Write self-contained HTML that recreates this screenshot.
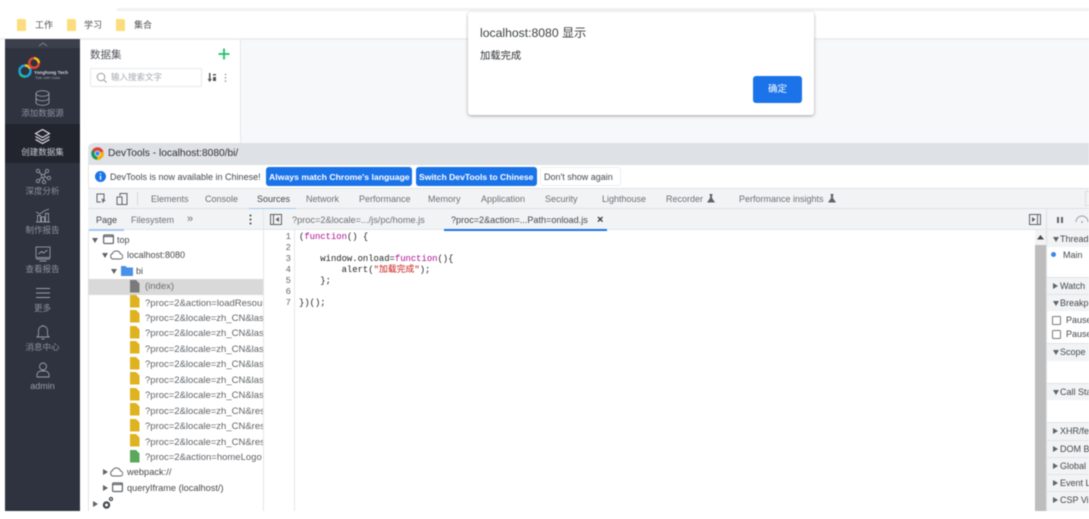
<!DOCTYPE html>
<html lang="zh"><head><meta charset="utf-8">
<style>
html,body{margin:0;padding:0;background:#fff}
#r{position:relative;width:1089px;height:519px;overflow:hidden;background:#fff;font-family:"Liberation Sans","Noto Sans CJK SC",sans-serif;filter:blur(.45px)}
#r div,#r svg,#r span.t{position:absolute}
.t{white-space:nowrap;font-size:9px;color:#5f6368;line-height:12px}
.c{text-align:center;color:#8f929b;font-size:8.5px;left:5px;width:75px;line-height:12px}
.tr{color:#45484c}
.f{color:#6d7074}
.code{font-family:"Liberation Mono","Noto Sans CJK SC",monospace;font-size:8.9px;color:#222;line-height:11px;white-space:pre}
.ln{font-family:"Liberation Mono",monospace;font-size:8.9px;color:#666;line-height:11px;left:280px;width:11px;text-align:right}
.h{left:1047px;width:42px;height:1px;background:#e2e4e7}
.rt{left:1060px;color:#45484c;font-size:9px}
</style></head><body><div id="r">

<!-- browser top -->
<div style="left:117px;top:8px;width:972px;height:3px;background:#f0f1f2"></div>
<div style="left:0;top:38px;width:1089px;height:2px;background:#eceef0"></div>
<svg style="left:17px;top:19px" width="10" height="12"><path d="M0 0h7l2 1v11H0z" fill="#fcdc7c"/></svg>
<span class="t" style="left:35px;top:19px;font-size:9px;color:#4c4f54">工作</span>
<svg style="left:67px;top:19px" width="10" height="12"><path d="M0 0h7l2 1v11H0z" fill="#fcdc7c"/></svg>
<span class="t" style="left:84px;top:19px;color:#4c4f54">学习</span>
<svg style="left:116px;top:19px" width="10" height="12"><path d="M0 0h7l2 1v11H0z" fill="#fcdc7c"/></svg>
<span class="t" style="left:134px;top:19px;color:#4c4f54">集合</span>

<!-- app bg -->
<div style="left:241px;top:40px;width:848px;height:104px;background:#f7f8fa"></div>
<div style="left:240px;top:40px;width:1px;height:104px;background:#e4e6e9"></div>

<!-- sidebar -->
<div style="left:5px;top:39px;width:75px;height:472px;background:#2f3340"></div>
<div style="left:5px;top:39px;width:75px;height:9px;background:#3c404d"></div>
<svg style="left:37px;top:41px" width="12" height="6"><path d="M2 5l4-3 4 3" fill="none" stroke="#7c808b"/></svg>
<div style="left:5px;top:124px;width:75px;height:39px;background:#22252e"></div>

<svg style="left:17px;top:56px" width="24" height="24" fill="none" stroke-width="2.4"><circle cx="8" cy="15" r="5.5" stroke="#1aa6d8"/><path d="M8 9.5a5.5 5.5 0 0 1 5 3" stroke="#f5c518"/><path d="M3 18a5.5 5.5 0 0 0 5 2.5" stroke="#22c08a"/><circle cx="17" cy="7" r="4.8" stroke="#e2452f"/><path d="M17 2.2a4.8 4.8 0 0 1 4.8 4.8" stroke="#f5c518"/></svg>
<span class="t" style="left:34px;top:69px;font-size:4.6px;font-weight:bold;color:#d0d2d6;line-height:7px">Yonghong Tech</span>
<span class="t" style="left:35px;top:75px;font-size:4px;color:#9a9da5;line-height:6px">Talk with Data</span>

<svg style="left:35px;top:90px" width="15" height="16" fill="none" stroke="#9a9da6" stroke-width=".9"><ellipse cx="7.5" cy="3.5" rx="6.5" ry="2.8"/><path d="M1 3.500v9c0 1.600 3 2.800 6.500 2.800s6.500-1.200 6.500-2.800v-9M1 8c0 1.600 3 2.800 6.500 2.800S14 9.600 14 8"/></svg>
<div class="t c" style="top:107px">添加数据源</div>
<svg style="left:34px;top:128px" width="17" height="17" fill="none" stroke="#e4e5e8" stroke-width="1.100"><path d="M8.500 1.500l7 4-7 4-7-4zM1.500 8.500l7 4 7-4M1.500 11.500l7 4 7-4"/></svg>
<div class="t c" style="top:146px;color:#c9cbd0">创建数据集</div>
<svg style="left:35px;top:168px" width="16" height="16" fill="none" stroke="#9a9da6" stroke-width=".9"><circle cx="3" cy="3" r="1.700"/><circle cx="12" cy="3" r="1.700"/><circle cx="8" cy="8" r="1.700"/><circle cx="14" cy="10" r="1.700"/><circle cx="3" cy="13" r="1.700"/><circle cx="9" cy="14" r="1.700"/><path d="M4 4l3 3M11 4L9 7M9.500 8.500L12.500 10M7 9.500L4 12M8.500 9.500v3"/></svg>
<div class="t c" style="top:185px">深度分析</div>
<svg style="left:35px;top:207px" width="16" height="16" fill="none" stroke="#9a9da6" stroke-width=".9"><path d="M1 15h14M2.500 15V8.500h3V15M6.500 15V10h3v5M10.500 15V6.500h3V15M1 5l4 2 4-3 5-2"/></svg>
<div class="t c" style="top:224px">制作报告</div>
<svg style="left:35px;top:246px" width="16" height="16" fill="none" stroke="#9a9da6" stroke-width=".9"><rect x="1" y="1" width="14" height="10.500"/><path d="M3.500 8l3-2.500 2 1.500 4-3M1 13h14M4.500 15h7"/></svg>
<div class="t c" style="top:263px">查看报告</div>
<svg style="left:35px;top:287px" width="16" height="12" stroke="#9a9da6" stroke-width=".9"><path d="M1 1.500h14M1 6h14M1 10.500h14"/></svg>
<div class="t c" style="top:302px">更多</div>
<svg style="left:36px;top:324px" width="14" height="16" fill="none" stroke="#9a9da6" stroke-width=".9"><path d="M1 13h12l-1.500-2V6.500a4.500 4.500 0 0 0-9 0V11zM7 1v1M5.500 15h3"/></svg>
<div class="t c" style="top:341px">消息中心</div>
<svg style="left:36px;top:362px" width="14" height="16" fill="none" stroke="#9a9da6" stroke-width=".9"><circle cx="7" cy="4.500" r="3.500"/><path d="M1 15v-2a4 4 0 0 1 4-4h4a4 4 0 0 1 4 4v2z"/></svg>
<div class="t c" style="top:380px;font-size:9px;color:#9a9da6">admin</div>

<!-- dataset panel -->
<span class="t" style="left:90px;top:48px;font-size:10.500px;color:#50535a;line-height:14px">数据集</span>
<svg style="left:218px;top:48px" width="12" height="12"><path d="M6 .5v11M.5 6h11" stroke="#1fbf6b" stroke-width="1.800"/></svg>
<div style="left:90px;top:68px;width:110px;height:17px;border:1px solid #e6e8eb;border-radius:2px;background:#fff"></div>
<svg style="left:96px;top:72px" width="11" height="11" fill="none" stroke="#9a9da3"><circle cx="5" cy="5" r="3.800"/><path d="M8 8l2.500 2.500"/></svg>
<span class="t" style="left:111px;top:71px;font-size:8.500px;color:#a5a8ad">输入搜索文字</span>
<svg style="left:207px;top:73px" width="10" height="9" fill="#555"><path d="M2 0h1.500v6H5L2.700 9 .5 6H2zM6 1h3v1.500H6zM6 4h3v4H6z"/></svg>
<svg style="left:224px;top:73px" width="3" height="10" fill="#a5a8ad"><circle cx="1.500" cy="1.500" r=".9"/><circle cx="1.500" cy="4.800" r=".9"/><circle cx="1.500" cy="8.100" r=".9"/></svg>

<!-- devtools window -->
<div style="left:88px;top:143px;width:1001px;height:368px;background:#fff;border-radius:6px 0 0 0"></div>
<div style="left:88px;top:143px;width:1001px;height:22px;background:#dee1e6;border-radius:6px 0 0 0"></div>
<div style="left:88px;top:146px;width:1px;height:365px;background:#e4e6e9"></div>
<svg style="left:91px;top:147px" width="13" height="13" viewBox="0 0 13 13"><circle cx="6.500" cy="6.500" r="6.200" fill="#db4437"/><path d="M6.500 6.500L1.100 3.500A6.200 6.200 0 0 0 6 12.700z" fill="#0f9d58"/><path d="M6.500 6.500L12.300 4.500A6.200 6.200 0 0 1 6 12.700z" fill="#f4b400"/><circle cx="6.500" cy="6.500" r="2.900" fill="#fff"/><circle cx="6.500" cy="6.500" r="2.200" fill="#4285f4"/></svg>
<span class="t" style="left:108px;top:147px;font-size:10.200px;color:#2e3033;line-height:13px">DevTools - localhost:8080/bi/</span>

<!-- infobar -->
<svg style="left:95px;top:171px" width="11" height="11"><circle cx="5.500" cy="5.500" r="5.500" fill="#1a73e8"/><path d="M5.500 2.300v1.300M5.500 4.800v4" stroke="#fff" stroke-width="1.300"/></svg>
<span class="t" style="left:110px;top:171px;font-size:9px;color:#45484c">DevTools is now available in Chinese!</span>
<div style="left:266px;top:167px;width:146px;height:19px;border-radius:3px;background:#1a73e8"></div>
<span class="t" style="left:269px;top:171px;color:#fff;font-weight:bold;font-size:8.700px">Always match Chrome's language</span>
<div style="left:416px;top:167px;width:121px;height:19px;border-radius:3px;background:#1a73e8"></div>
<span class="t" style="left:419px;top:171px;color:#fff;font-weight:bold;font-size:8.600px">Switch DevTools to Chinese</span>
<div style="left:540px;top:167px;width:79px;height:17px;border-radius:3px;border:1px solid #eceef0;background:#fff"></div>
<span class="t" style="left:544px;top:171px;color:#45484c">Don't show again</span>

<!-- main tabs -->
<div style="left:88px;top:188px;width:1001px;height:21px;background:#f1f3f4;border-top:1px solid #e0e2e5;border-bottom:1px solid #dfe1e4;box-sizing:border-box"></div>
<svg style="left:96px;top:193px" width="11" height="12" fill="none" stroke="#5f6368"><path d="M8 7V1H1v8h4"/><path d="M5.500 5.500l4.500 2-2 .8L7 10.500z" fill="#5f6368" stroke="none"/></svg>
<svg style="left:116px;top:193px" width="12" height="12" fill="none" stroke="#5f6368"><path d="M4 3V.5h7v11H4M1 4h5v7.500H1z"/></svg>
<div style="left:137px;top:192px;width:1px;height:13px;background:#d6d8db"></div>
<span class="t f" style="left:151px;top:193px">Elements</span>
<span class="t f" style="left:205px;top:193px">Console</span>
<span class="t tr" style="left:257px;top:193px">Sources</span>
<div style="left:249px;top:208px;width:47px;height:1px;background:#a8c7f0"></div>
<span class="t f" style="left:306px;top:193px">Network</span>
<span class="t f" style="left:359px;top:193px">Performance</span>
<span class="t f" style="left:428px;top:193px">Memory</span>
<span class="t f" style="left:481px;top:193px">Application</span>
<span class="t f" style="left:545px;top:193px">Security</span>
<span class="t f" style="left:602px;top:193px">Lighthouse</span>
<span class="t f" style="left:666px;top:193px">Recorder</span>
<svg style="left:707px;top:194px" width="8" height="9" fill="#5f6368"><path d="M2.500 0h3v1L5 1.500V4l3 4.500H0L3 4V1.500L2.500 1z"/></svg>
<span class="t f" style="left:739px;top:193px">Performance insights</span>
<svg style="left:828px;top:194px" width="8" height="9" fill="#5f6368"><path d="M2.500 0h3v1L5 1.500V4l3 4.500H0L3 4V1.500L2.500 1z"/></svg>
<div style="left:1085px;top:191px;width:4px;height:15px;border:1px solid #dadce0;border-right:0;box-sizing:border-box"></div>

<!-- sub tabs -->
<div style="left:88px;top:209px;width:1001px;height:21px;background:#f1f3f4;border-bottom:1px solid #e3e5e8;box-sizing:border-box"></div>
<span class="t tr" style="left:96px;top:214px">Page</span>
<div style="left:89px;top:229px;width:35px;height:1.500px;background:#a8c7f0"></div>
<span class="t f" style="left:131px;top:214px">Filesystem</span>
<span class="t f" style="left:187px;top:213px;font-size:11px">»</span>
<svg style="left:249px;top:214px" width="3" height="11" fill="#45484c"><circle cx="1.500" cy="1.500" r="1"/><circle cx="1.500" cy="5.500" r="1"/><circle cx="1.500" cy="9.500" r="1"/></svg>
<div style="left:263px;top:209px;width:1px;height:302px;background:#e3e5e8"></div>
<svg style="left:270px;top:214px" width="12" height="11" fill="none" stroke="#5f6368"><rect x=".5" y=".5" width="11" height="10"/><path d="M3.500 .5v10"/><path d="M9 3v5L5.500 5.500z" fill="#5f6368" stroke="none"/></svg>
<span class="t f" style="left:292px;top:214px;font-size:9.200px">?proc=2&amp;locale=.../js/pc/home.js</span>
<span class="t tr" style="left:451px;top:214px;font-size:9.100px">?proc=2&amp;action=...Path=onload.js</span>
<span class="t" style="left:597px;top:214px;color:#333;font-size:11px;font-weight:bold">×</span>
<div style="left:444px;top:229px;width:163px;height:1.500px;background:#1a73e8"></div>
<svg style="left:1029px;top:214px" width="12" height="11" fill="none" stroke="#5f6368"><rect x=".5" y=".5" width="11" height="10"/><path d="M8.500 .5v10"/><path d="M3 3v5l3.500-2.500z" fill="#5f6368" stroke="none"/></svg>
<div style="left:1046px;top:209px;width:1px;height:302px;background:#dfe1e4"></div>
<svg style="left:1056px;top:216px" width="8" height="8" fill="#5f6368"><path d="M1 1h2v6H1zM5 1h2v6H5z"/></svg>
<svg style="left:1075px;top:215px" width="14" height="9" fill="none" stroke="#a8abaf" stroke-width="1.200"><path d="M1 7a6 6 0 0 1 12 0"/><circle cx="7" cy="7" r="1" fill="#a8abaf" stroke="none"/></svg>

<!-- tree -->
<div style="left:88px;top:279px;width:175px;height:15.500px;background:#d9d9d9"></div>
<svg style="left:92px;top:238px" width="6" height="5" fill="#5f6368"><path d="M0 0h6L3 5z"/></svg>
<svg style="left:103px;top:234px" width="11" height="11" fill="none" stroke="#5f6368" stroke-width="1.200"><rect x=".6" y="1" width="9.800" height="8.500" rx="1"/><path d="M.6 2.500h9.800"/></svg>
<span class="t tr" style="left:117px;top:234px">top</span>
<svg style="left:102px;top:253px" width="6" height="5" fill="#5f6368"><path d="M0 0h6L3 5z"/></svg>
<svg style="left:109px;top:250px" width="14" height="10" fill="none" stroke="#5f6368"><path d="M3.500 9h7.500a2.500 2.500 0 0 0 .5-5A4.300 4.300 0 0 0 3.500 3.500 3 3 0 0 0 3.500 9z"/></svg>
<span class="t tr" style="left:127px;top:249px">localhost:8080</span>
<svg style="left:111px;top:269px" width="6" height="5" fill="#5f6368"><path d="M0 0h6L3 5z"/></svg>
<svg style="left:121px;top:266px" width="12" height="10" fill="#4a90e8"><path d="M0 0h4.500l1.500 1.500h6V10H0z"/></svg>
<span class="t tr" style="left:136px;top:265px">bi</span>

<svg style="left:130px;top:280px" width="10" height="13" fill="#7a7a7a"><path d="M0 0h6l3.500 3.500V12.500H0z"/></svg>
<span class="t" style="left:145px;top:281px;color:#6b6e72;font-size:9.500px">(index)</span>
<svg style="left:130px;top:295px" width="10" height="13" fill="#dfb21f"><path d="M0 0h6l3.500 3.500V12.500H0z"/></svg>
<svg style="left:130px;top:310px" width="10" height="13" fill="#dfb21f"><path d="M0 0h6l3.500 3.500V12.500H0z"/></svg>
<svg style="left:130px;top:326px" width="10" height="13" fill="#dfb21f"><path d="M0 0h6l3.500 3.500V12.500H0z"/></svg>
<svg style="left:130px;top:341px" width="10" height="13" fill="#dfb21f"><path d="M0 0h6l3.500 3.500V12.500H0z"/></svg>
<svg style="left:130px;top:357px" width="10" height="13" fill="#dfb21f"><path d="M0 0h6l3.500 3.500V12.500H0z"/></svg>
<svg style="left:130px;top:372px" width="10" height="13" fill="#dfb21f"><path d="M0 0h6l3.500 3.500V12.500H0z"/></svg>
<svg style="left:130px;top:388px" width="10" height="13" fill="#dfb21f"><path d="M0 0h6l3.500 3.500V12.500H0z"/></svg>
<svg style="left:130px;top:403px" width="10" height="13" fill="#dfb21f"><path d="M0 0h6l3.500 3.500V12.500H0z"/></svg>
<svg style="left:130px;top:419px" width="10" height="13" fill="#dfb21f"><path d="M0 0h6l3.500 3.500V12.500H0z"/></svg>
<svg style="left:130px;top:434px" width="10" height="13" fill="#dfb21f"><path d="M0 0h6l3.500 3.500V12.500H0z"/></svg>
<svg style="left:130px;top:450px" width="10" height="13" fill="#5ba85a"><path d="M0 0h6l3.500 3.500V12.500H0z"/></svg>
<div style="left:145px;top:295.500px;width:118px;height:172px;overflow:hidden;font-size:9.500px;color:#5f6368;line-height:15.450px;white-space:nowrap">?proc=2&amp;action=loadResources<br>?proc=2&amp;locale=zh_CN&amp;lastModified<br>?proc=2&amp;locale=zh_CN&amp;lastModified<br>?proc=2&amp;locale=zh_CN&amp;lastModified<br>?proc=2&amp;locale=zh_CN&amp;lastModified<br>?proc=2&amp;locale=zh_CN&amp;lastModified<br>?proc=2&amp;locale=zh_CN&amp;lastModified<br>?proc=2&amp;locale=zh_CN&amp;resource<br>?proc=2&amp;locale=zh_CN&amp;resource<br>?proc=2&amp;locale=zh_CN&amp;resource<br>?proc=2&amp;action=homeLogo</div>

<svg style="left:103px;top:469px" width="5" height="6" fill="#5f6368"><path d="M0 0l5 3-5 3z"/></svg>
<svg style="left:109px;top:467px" width="14" height="10" fill="none" stroke="#5f6368"><path d="M3.500 9h7.500a2.500 2.500 0 0 0 .5-5A4.300 4.300 0 0 0 3.500 3.500 3 3 0 0 0 3.500 9z"/></svg>
<span class="t tr" style="left:127px;top:466px;font-size:9.300px">webpack://</span>
<svg style="left:103px;top:485px" width="5" height="6" fill="#5f6368"><path d="M0 0l5 3-5 3z"/></svg>
<svg style="left:112px;top:482px" width="11" height="11" fill="none" stroke="#5f6368" stroke-width="1.200"><rect x=".6" y="1" width="9.800" height="8.500" rx="1"/><path d="M.6 2.500h9.800"/></svg>
<span class="t tr" style="left:127px;top:482px;font-size:9.200px">queryIframe (localhost/)</span>
<svg style="left:93px;top:501px" width="5" height="6" fill="#5f6368"><path d="M0 0l5 3-5 3z"/></svg>
<svg style="left:102px;top:496px" width="11" height="14" fill="none" stroke="#45484c"><circle cx="4.500" cy="9" r="2.600" stroke-width="2.200"/><circle cx="9" cy="3" r="1.500" stroke-width="1.300"/></svg>

<!-- code -->
<div style="left:294px;top:230px;width:1px;height:281px;background:#e6e7e9"></div>
<div class="ln" style="top:231.500px;line-height:11px">1<br>2<br>3<br>4<br>5<br>6<br>7</div>
<div class="code" style="left:299px;top:231.500px">(<span style="color:#aa0d91">function</span>() {

    window.onload=<span style="color:#aa0d91">function</span>(){
        alert(<span style="color:#c41a16">"加载完成"</span>);
    };

})();</div>

<!-- scrollbar -->
<div style="left:1035px;top:230px;width:11px;height:281px;background:#f3f3f3"></div>
<div style="left:1035px;top:245px;width:11px;height:266px;background:#bdbdbd"></div>
<svg style="left:1037px;top:235px" width="7" height="5" fill="#45484c"><path d="M0 4.500h7L3.500 0z"/></svg>

<!-- right pane -->
<div style="left:1047px;top:230px;width:42px;height:17px;background:#f1f3f4"></div>
<svg style="left:1053px;top:237px" width="6" height="5" fill="#5f6368"><path d="M0 0h6L3 5z"/></svg>
<span class="t rt" style="top:233px">Threads</span>
<div style="left:1051px;top:252px;width:5px;height:5px;border-radius:50%;background:#3f87e8"></div>
<span class="t rt" style="left:1063px;top:249px">Main</span>
<div class="h" style="top:277px"></div>
<div style="left:1047px;top:278px;width:42px;height:16px;background:#f1f3f4"></div>
<svg style="left:1053px;top:283px" width="5" height="6" fill="#5f6368"><path d="M0 0l5 3-5 3z"/></svg>
<span class="t rt" style="top:280px">Watch</span>
<div class="h" style="top:294px"></div>
<div style="left:1047px;top:295px;width:42px;height:16px;background:#f1f3f4"></div>
<svg style="left:1053px;top:301px" width="6" height="5" fill="#5f6368"><path d="M0 0h6L3 5z"/></svg>
<span class="t rt" style="top:297px">Breakpoints</span>
<div style="left:1052px;top:316px;width:7px;height:7px;border:1px solid #777;border-radius:1.500px"></div>
<span class="t rt" style="left:1066px;top:314px">Pause</span>
<div style="left:1052px;top:330px;width:7px;height:7px;border:1px solid #777;border-radius:1.500px"></div>
<span class="t rt" style="left:1066px;top:328px">Pause</span>
<div class="h" style="top:343px"></div>
<div style="left:1047px;top:344px;width:42px;height:17px;background:#f1f3f4"></div>
<svg style="left:1053px;top:350px" width="6" height="5" fill="#5f6368"><path d="M0 0h6L3 5z"/></svg>
<span class="t rt" style="top:346px">Scope</span>
<div class="h" style="top:383px"></div>
<div style="left:1047px;top:384px;width:42px;height:16px;background:#f1f3f4"></div>
<svg style="left:1053px;top:390px" width="6" height="5" fill="#5f6368"><path d="M0 0h6L3 5z"/></svg>
<span class="t rt" style="top:386px">Call Stack</span>
<div class="h" style="top:422px"></div>
<div style="left:1047px;top:423px;width:42px;height:88px;background:#f1f3f4"></div>
<svg style="left:1053px;top:428px" width="5" height="6" fill="#5f6368"><path d="M0 0l5 3-5 3z"/></svg>
<span class="t rt" style="top:425px">XHR/fetch</span>
<div class="h" style="top:440px"></div>
<svg style="left:1053px;top:446px" width="5" height="6" fill="#5f6368"><path d="M0 0l5 3-5 3z"/></svg>
<span class="t rt" style="top:443px">DOM Breakpoints</span>
<div class="h" style="top:457px"></div>
<svg style="left:1053px;top:463px" width="5" height="6" fill="#5f6368"><path d="M0 0l5 3-5 3z"/></svg>
<span class="t rt" style="top:460px">Global</span>
<div class="h" style="top:474px"></div>
<svg style="left:1053px;top:480px" width="5" height="6" fill="#5f6368"><path d="M0 0l5 3-5 3z"/></svg>
<span class="t rt" style="top:477px">Event Listeners</span>
<div class="h" style="top:491px"></div>
<svg style="left:1053px;top:497px" width="5" height="6" fill="#5f6368"><path d="M0 0l5 3-5 3z"/></svg>
<span class="t rt" style="top:494px">CSP Violations</span>

<!-- alert -->
<div style="left:468px;top:12px;width:346px;height:103px;background:#fff;border-radius:3px;box-shadow:0 1px 3px rgba(0,0,0,.35)"></div>
<span class="t" style="left:480px;top:25px;font-size:12.200px;color:#3c4043;line-height:17px">localhost:8080 显示</span>
<span class="t" style="left:480px;top:50px;font-size:10.300px;color:#303235;line-height:14px">加载完成</span>
<div style="left:753px;top:76px;width:49px;height:27px;border-radius:3px;background:#1a73e8"></div>
<span class="t" style="left:768px;top:84px;color:#fff;font-size:9.500px">确定</span>

</div></body></html>
